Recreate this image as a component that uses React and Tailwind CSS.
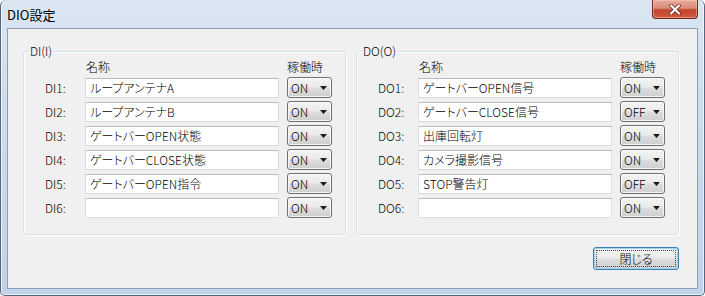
const JP = "font-['Noto_Sans_CJK_JP',sans-serif] [font-feature-settings:'palt']";

const diRows = [
  { label: 'DI1:', name: 'ループアンテナA', state: 'ON' },
  { label: 'DI2:', name: 'ループアンテナB', state: 'ON' },
  { label: 'DI3:', name: 'ゲートバーOPEN状態', state: 'ON' },
  { label: 'DI4:', name: 'ゲートバーCLOSE状態', state: 'ON' },
  { label: 'DI5:', name: 'ゲートバーOPEN指令', state: 'ON' },
  { label: 'DI6:', name: '', state: 'ON' },
];

const doRows = [
  { label: 'DO1:', name: 'ゲートバーOPEN信号', state: 'ON' },
  { label: 'DO2:', name: 'ゲートバーCLOSE信号', state: 'OFF' },
  { label: 'DO3:', name: '出庫回転灯', state: 'ON' },
  { label: 'DO4:', name: 'カメラ撮影信号', state: 'ON' },
  { label: 'DO5:', name: 'STOP警告灯', state: 'OFF' },
  { label: 'DO6:', name: '', state: 'ON' },
];

function Combo({ value }) {
  return (
    <div className="h-[21px] w-[45px] flex items-center justify-between rounded-[3px] border border-[#707070] bg-[linear-gradient(#f3f3f3_0%,#ebebeb_48%,#dddddd_52%,#cfcfcf_100%)] shadow-[inset_0_0_0_1px_rgba(255,255,255,0.75)] pl-[3px] pr-[4px]">
      <span className="leading-[14px]">{value}</span>
      <svg width="7" height="4" viewBox="0 0 7 4">
        <path d="M0 0h7L3.5 4z" fill="#1a1a1a" />
      </svg>
    </div>
  );
}

function TextBox({ value }) {
  return (
    <div className="h-[20px] w-[194px] flex items-center bg-white border border-[#dadde3] border-t-[#b8bbc2] pl-[4px] leading-[14px] whitespace-nowrap overflow-hidden">
      {value}
    </div>
  );
}

// Windows 7 style group box
function GroupBox({ title, rows }) {
  return (
    <fieldset className="w-[323px] rounded-[3px] border border-[#d5dfe5] shadow-[inset_1px_1px_0_#fff,1px_1px_0_#fff] pb-[16px]">
      <legend className="ml-[4px] px-[2px] leading-[14px]">{title}</legend>
      <div className="grid grid-cols-[53px_194px_45px] gap-x-2 gap-y-[3px]">
        <div className="h-[16px]" />
        <div className="h-[16px] pl-[1px] pt-[2px] leading-[14px]">名称</div>
        <div className="h-[16px] pt-[2px] leading-[14px]">稼働時</div>
        {rows.map((r) => (
          <div key={r.label} className="contents">
            <div className="h-[21px] flex items-center pl-[21px] leading-[14px]">{r.label}</div>
            <div className="h-[21px] flex items-center">
              <TextBox value={r.name} />
            </div>
            <Combo value={r.state} />
          </div>
        ))}
      </div>
    </fieldset>
  );
}

function CloseX() {
  return (
    <div className="w-[46px] h-[19px] flex items-center justify-center rounded-b-[4px] border border-t-0 border-[#6e2a1f] bg-[linear-gradient(#e9aa9b_0%,#dc8d7a_45%,#c4452e_55%,#cf5a40_100%)] shadow-[inset_0_0_0_1px_rgba(255,210,200,0.45)]">
      <svg width="12" height="11" viewBox="0 0 12 11">
        <path d="M2 1.5l8 8M10 1.5l-8 8" stroke="#5a1d14" strokeWidth="3.6" strokeLinecap="round" />
        <path d="M2 1.5l8 8M10 1.5l-8 8" stroke="#ffffff" strokeWidth="2.2" strokeLinecap="round" />
      </svg>
    </div>
  );
}

export default function App() {
  return (
    <div className={`w-[705px] h-[296px] overflow-hidden text-[12px] font-light text-black ${JP}`}>
      <div className="h-full flex flex-col rounded-tl-[6px] rounded-tr-[6px] rounded-b-[5px] border border-t-0 border-[#55677d] bg-[linear-gradient(180deg,#dbe6f2_0%,#cddcee_35%,#bfd3e9_100%)] shadow-[inset_1px_0_0_rgba(255,255,255,0.7),inset_-1px_0_0_rgba(255,255,255,0.7),inset_0_-1px_0_rgba(255,255,255,0.6)]">
        {/* title bar */}
        <div className="h-[28px] flex justify-between items-start">
          <div className="pl-[6px] pt-[8px] text-[13px] leading-[14px] font-normal">DIO設定</div>
          <div className="mr-[6px]">
            <CloseX />
          </div>
        </div>

        {/* client area */}
        <div className="mx-[6px] h-[261px] border border-[#8e9fb3] bg-[#f0f0f0] pt-[15px] pl-[15px] pr-[18px]">
          <div className="flex gap-[10px]">
            <GroupBox title="DI(I)" rows={diRows} />
            <GroupBox title="DO(O)" rows={doRows} />
          </div>
          <div className="flex justify-end mt-[12px]">
            <button className="w-[86px] h-[23px] rounded-[3px] border border-[#3c7fb1] bg-[linear-gradient(#f2f2f2_0%,#ebebeb_48%,#dddddd_52%,#cfcfcf_100%)] shadow-[inset_0_0_0_1px_#9fd5f3] p-[2px]">
              <span className="h-full w-full flex items-center justify-center border border-dotted border-[#444] leading-[14px]">
                閉じる
              </span>
            </button>
          </div>
        </div>
      </div>
    </div>
  );
}
